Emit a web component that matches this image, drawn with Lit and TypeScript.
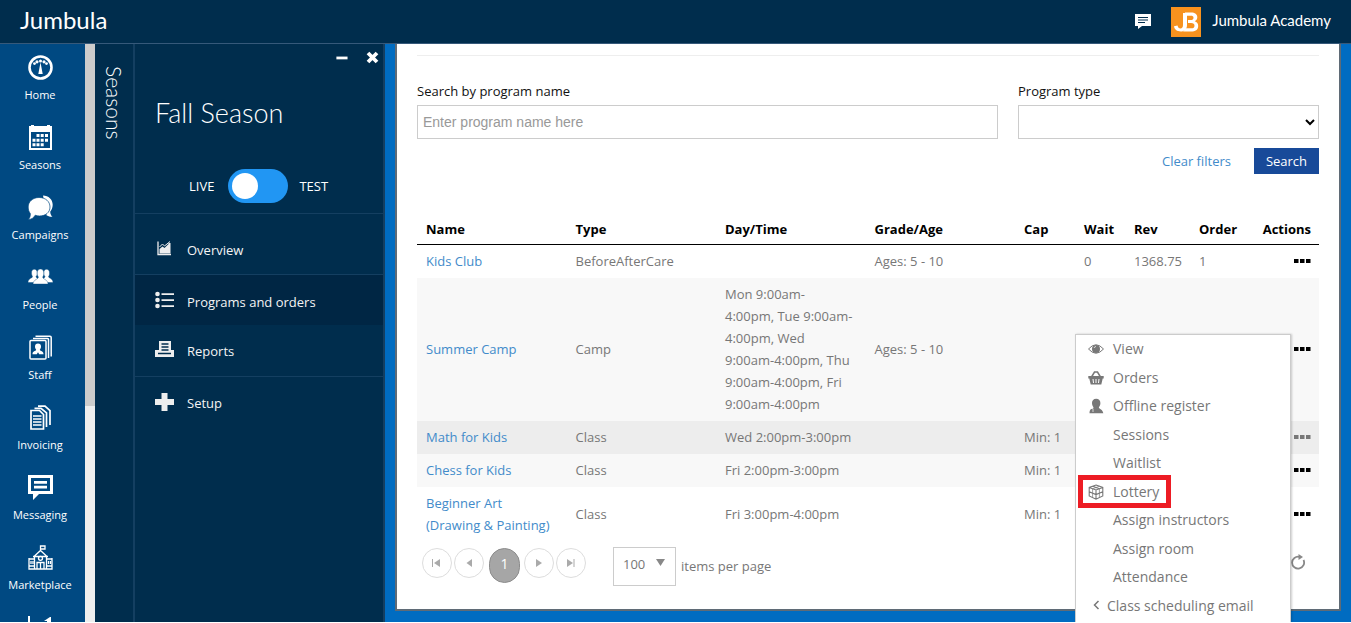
import { LitElement, html, css, svg, nothing, TemplateResult } from "lit";
import { customElement } from "lit/decorators.js";
import { classMap } from "lit/directives/class-map.js";

const icon = (size: number, box: string, body: TemplateResult) =>
  html`<svg width=${size} height=${size} viewBox=${box} aria-hidden="true">${body}</svg>`;

const navIcons: Record<string, TemplateResult> = {
  Home: svg`<circle cx="12.5" cy="12.5" r="11" fill="none" stroke="#fff" stroke-width="2.6"/>
    <path d="M12.500 7.500 L10.300 19 H14.700Z" fill="#fff"/>
    <g fill="#fff"><circle cx="12.500" cy="6" r="1.500"/><circle cx="9" cy="6.800" r="1.600"/><circle cx="16" cy="6.800" r="1.600"/><circle cx="6.500" cy="8.600" r="1.400"/><circle cx="18.500" cy="8.600" r="1.400"/></g>`,
  Seasons: svg`<path d="M1 1H3V0H6V1H19V0H22V1H24V25H1Z" fill="#fff"/>
    <path d="M3 7H22V23H3Z" fill="#004982"/>
    <g fill="#fff"><path d="M8.500 9h3v3h-3zM12.700 9h3v3h-3zM17 9h3v3h-3zM4.500 13.700h3v3h-3zM8.500 13.700h3v3h-3zM12.700 13.700h3v3h-3zM17 13.700h3v3h-3zM4.500 18.300h3v3h-3zM8.500 18.300h3v3h-3zM12.700 18.300h3v3h-3z"/></g>`,
  Campaigns: svg`<path d="M15 .5c5.500 0 9.700 4 9.700 9.300 0 3-1.100 5.300-2.500 7 .2 2.500 1 4 2.300 5-2.500.2-4.700-.6-6-1.500z" fill="#fff"/>
    <path d="M11 2.500c6.500 0 11 4 11 9.500S17.500 21 11.500 21c-1.500 0-3-.3-4.300-.8-1.500 2.800-4 4.200-6.900 4.300 1.500-1.500 2.200-3.500 2-6C1 17 .2 14.800.2 12 .2 6.500 5 2.500 11 2.500Z" fill="#fff" stroke="#004982" stroke-width=".7"/>`,
  People: svg`<g fill="#fff" stroke="#004982" stroke-width=".4"><path d="M3.500 8c0-2.500 1-3.700 2.800-3.700S9.200 5.500 9.200 8s-.7 2.800-1.200 3.500c0 1.500 3 2 3 6H0c0-4.500 4.500-4 4.500-6C4 10.500 3.500 9.500 3.500 8Z"/>
    <path d="M15.800 8c0-2.500 1-3.700 2.800-3.700s2.900 1.200 2.900 3.700-.5 2.500-1 3.500c0 2 4.500 1.500 4.500 6H14c0-4 3-4.500 3-6-.5-.7-1.200-1.500-1.200-3.500Z"/>
    <path d="M9.200 8c0-2.500 1.300-4 3.300-4s3.300 1.500 3.300 4-.5 3-1.100 4c0 2.500 4.900 2 5.400 7H5c.5-5 5.400-4.500 5.400-7-.6-1-1.200-1.700-1.200-4Z"/></g>`,
  Staff: svg`<g fill="none" stroke="#fff" stroke-width="1.500"><rect x="2" y="5.500" width="16" height="18.500" rx="1"/><path d="M5 3.500h14.500a1 1 0 0 1 1 1V23M7.500 1.200H22a1.200 1.200 0 0 1 1.200 1.200V21.500"/></g>
    <path d="M10 8.500c2 0 3 1.200 3 3 0 1.500-.5 2.300-1.200 3.200.5 1.600 3.700 1 3.700 4.500h-4.300l-1.200-2-1.200 2H4.500c0-3.500 3.200-2.900 3.700-4.500C7.500 13.800 7 13 7 11.500c0-1.800 1-3 3-3Z" fill="#fff"/>`,
  Invoicing: svg`<g fill="none" stroke="#fff" stroke-width="1.700"><path d="M7.500 5.500H3V24h12.500V9.500L11.500 5.500Z"/><path d="M6.500 3.300H13l5.500 4.500V22M10 1.200h7l5 4.500V20M5 11h8.500M5 14h8.500M5 17h8.500M5 20h8.500"/></g>`,
  Messaging: svg`<path d="M0 0H25V19H11L5 25V19H0ZM3 3V16H22V3Z" fill="#fff" fill-rule="evenodd"/><path d="M6 6h13v2.700H6zM6 10.700h13v2.700H6z" fill="#fff"/>`,
  Marketplace: svg`<g fill="none" stroke="#fff" stroke-width="1.300"><path d="M12.500 5.500V1h4.500v3h-4.500M6.500 24V11l6-5.500 6 5.500v13M5 11.500h15M.7 14h5.800M18.500 14h5.800M1 13v11h23V13M9 24v-6.500h7V24M12.500 17.500V24"/><circle cx="12.500" cy="13.300" r="2"/><path d="M3 16v3M5 16v3M20.500 16v3M22.500 16v3M1 21h5M19 21h5"/></g>`,
  "": svg`<path d="M0 1h2v24H0zM16 6l6-4h1v23h-4V6z" fill="#fff"/>`,
};

const menuIcons: Record<string, TemplateResult> = {
  eye: svg`<path d="M.5 8Q8-.5 15.500 8 8 16.500.5 8Z" fill="none" stroke="#777"/><circle cx="8" cy="8" r="4" fill="#777"/><path d="M6 7Q6.500 5.500 8 5.500" stroke="#fff" fill="none" stroke-width=".7"/>`,
  basket: svg`<path d="M3.500 7 6.500 2H9.500L12.500 7" fill="none" stroke="#777" stroke-width="1.500"/><path d="M.3 6h15.400v2.500h-1L13.300 14.500H2.700L1.300 8.500h-1Z" fill="#777"/><path d="M5 9l.5 4M8 9v4M11 9l-.5 4" stroke="#fff"/>`,
  person: svg`<path d="M4 5C4 2.500 5.500.8 8.200.8s4.200 1.700 4.200 4.200c0 2-.8 3.400-1.600 4.400.4 1.800 4 1.600 4.500 5.800H1.500c0-1.700.3-2.900 1-3.700l3.200-1.900C4.700 8.200 4 7 4 5Z" fill="#777"/><path d="M2 10.500h3v3.500" fill="none" stroke="#fff" stroke-width=".7"/>`,
  cube: svg`<path d="M8 1 14.800 3.500V12L8 15.200 1.200 12V3.500ZM1.200 3.500 8 6l6.800-2.500M8 6v9.200M4.600 2.300l6.800 2.500M1.200 7.700 8 10.600l6.800-2.900" fill="none" stroke="#777" stroke-width="1.100"/><path d="M4.600 5v8.500M11.400 5v8.500M11.400 2.300 4.600 4.800" fill="none" stroke="#777" stroke-width=".7"/>`,
};

const sideIcons: Record<string, TemplateResult> = {
  chart: svg`<path d="M3 2.500v13H16" fill="none" stroke="#eee" stroke-width="1.300"/><path d="M4.500 14.500V10l3-2.500 2 1.500 4-4v9.500ZM13.500 4h2v10.500h-2Z" fill="#eee"/><path d="M4.500 8 7.500 5l2 2 5.500-4.500" fill="none" stroke="#eee"/>`,
  list: svg`<g fill="#eee"><circle cx="2.500" cy="3" r="2.300"/><circle cx="2.500" cy="9" r="2.300"/><circle cx="2.500" cy="15" r="2.300"/><path d="M6.500 2.200H19v1.800H6.500zM6.500 8.200H19V10H6.500zM6.500 14.200H19V16H6.500z"/></g>`,
  print: svg`<path d="M4 0h12v9h3v7H0v-7h4Z" fill="#eee"/><path d="M6.500 3h7M6.500 6h7M6.500 9h7M3 12.500h13" stroke="#002d4d" stroke-width="1.300"/>`,
  plus: svg`<path d="M6.500 0h6v6h6.500v6h-6.500v6h-6v-6H0V6h6.500Z" fill="#eee"/>`,
};

interface Program {
  name: string[];
  type: string;
  time: string[];
  ages?: string;
  cap?: string;
  wait?: string;
  rev?: string;
  order?: string;
  shade?: string;
}

const programs: Program[] = [
  { name: ["Kids Club"], type: "BeforeAfterCare", time: [], ages: "Ages: 5 - 10", wait: "0", rev: "1368.75", order: "1" },
  {
    name: ["Summer Camp"],
    type: "Camp",
    time: ["Mon 9:00am-", "4:00pm, Tue 9:00am-", "4:00pm, Wed", "9:00am-4:00pm, Thu", "9:00am-4:00pm, Fri", "9:00am-4:00pm"],
    ages: "Ages: 5 - 10",
    shade: "alt",
  },
  { name: ["Math for Kids"], type: "Class", time: ["Wed 2:00pm-3:00pm"], cap: "Min: 1", shade: "open" },
  { name: ["Chess for Kids"], type: "Class", time: ["Fri 2:00pm-3:00pm"], cap: "Min: 1", shade: "alt" },
  { name: ["Beginner Art", "(Drawing & Painting)"], type: "Class", time: ["Fri 3:00pm-4:00pm"], cap: "Min: 1" },
];

const lines = (items: string[]) => items.map((t, i) => html`${i ? html`<br />` : nothing}${t}`);

@customElement("top-bar")
class TopBar extends LitElement {
  static styles = css`
    :host { display: block; background: #002d4d; border-bottom: 1px solid #36597a; color: #fff; }
    .bar { height: 43px; display: flex; align-items: center; padding: 0 20px; font-family: Lato, "Open Sans", sans-serif; }
    .brand { font-size: 24px; line-height: 40px; height: 43px; flex: 1; color: inherit; text-decoration: none; }
    .chat { background: none; border: 0; padding: 0; margin-right: 20px; display: flex; }
    .logo { width: 30px; height: 30px; margin-right: 11px; }
    .account { font-size: 15px; line-height: 20px; height: 23px; }
    svg { display: block; }
  `;
  render() {
    return html`<header class="bar">
      <a class="brand" href="#">Jumbula</a>
      <button class="chat" aria-label="Messages">
        ${icon(16, "0 0 16 16", svg`<path d="M0 0H16V12H7L3 15V12H0Z" fill="#fff"/><path d="M3 3.500h10M3 6h10M3 8.500h7" stroke="#002d4d"/>`)}
      </button>
      <svg class="logo" viewBox="0 0 30 30" aria-hidden="true">
        <rect width="30" height="30" fill="#f7921e" />
        <path d="M12 6h4v12c0 4-2.500 6.500-6.200 6.500-4 0-6.300-2-6.800-5.200l3.500-.8c.4 2 1.400 2.900 2.900 2.900 1.700 0 2.600-1.200 2.600-3.400Z" fill="#fff" />
        <path d="M14 5.500h6c4 0 6.300 1.800 6.300 4.800 0 2-1 3.200-2.600 4 2.300.7 3.500 2.300 3.500 4.600 0 3.700-2.800 5.600-7.200 5.600h-8l3-3.200h5.300c2.200 0 3.200-.9 3.200-2.600s-1.200-2.600-3.400-2.600H17V13h2.500c2 0 3-.8 3-2.300s-1-2-2.800-2H14Z" fill="#fff" />
      </svg>
      <span class="account">Jumbula Academy</span>
    </header>`;
  }
}

@customElement("main-nav")
class MainNav extends LitElement {
  static styles = css`
    :host { display: flex; overflow: hidden; }
    .list { width: 85px; box-sizing: border-box; padding: 0 5px 0 0; background: #004982; overflow: hidden; }
    .item { display: flex; flex-direction: column; align-items: center; gap: 5px; height: 70px; box-sizing: border-box; padding-top: 11px; color: #fff; text-decoration: none; font: 11px/20px "Open Sans", sans-serif; }
    .item svg { flex: none; display: block; }
    .track { width: 10px; background: #eee; }
    .thumb { height: 362px; background: #ccc; }
  `;
  render() {
    return html`<nav class="list">
        ${Object.entries(navIcons).map(
          ([name, shape]) => html`<a class="item" href="#" aria-label=${name || "Analytics"}>${icon(25, "0 0 25 25", shape)}<span>${name}</span></a>`
        )}
      </nav>
      <div class="track"><div class="thumb"></div></div>`;
  }
}

@customElement("season-panel")
class SeasonPanel extends LitElement {
  static styles = css`
    :host { display: flex; background: #002d4d; color: #fff; font: 13px/20px "Open Sans", sans-serif; }
    .tab { width: 38px; border-right: 2px solid #143f61; box-sizing: content-box; }
    .tab span { display: block; writing-mode: vertical-rl; margin: 22px 0 0 7px; font: 300 21px/24px Lato, sans-serif; }
    .panel { width: 248px; border-right: 2px solid #143f61; }
    .tools { display: flex; justify-content: flex-end; gap: 18px; padding: 6px 4px 0 0; }
    .tools button { background: none; border: 0; padding: 0; width: 13px; height: 14px; }
    svg { display: block; flex: none; }
    h1 { margin: 33px 20px 0; font: 300 27px/32px Lato, sans-serif; }
    .mode { display: flex; align-items: center; gap: 11px; margin: 40px 0 10px 54px; }
    .switch { appearance: none; margin: 0 0 0 3px; width: 60px; height: 34px; border-radius: 17px; background: #2196f3; padding: 4px; }
    .switch::before { content: ""; display: block; width: 26px; height: 26px; border-radius: 50%; background: #fff; }
    .link { display: flex; align-items: center; gap: 13px; height: 51px; padding-left: 20px; color: #f4f4f4; text-decoration: none; }
    .link.ruled { border-top: 1px solid #143f61; }
    .link.tall { height: 60px; }
    .link.tall span { padding-top: 12px; }
    .link.tall svg { padding-top: 8px; }
    .link.current { height: 50px; background: #002644; }
    .link.current span { padding-top: 4px; }
  `;
  render() {
    const links = [
      ["chart", "Overview", "ruled tall"],
      ["list", "Programs and orders", "ruled current"],
      ["print", "Reports", ""],
      ["plus", "Setup", "ruled"],
    ];
    return html`<div class="tab"><span>Seasons</span></div>
      <section class="panel">
        <div class="tools">
          <button aria-label="Minimize">${icon(13, "0 0 13 14", svg`<path d="M1 6h12v3H1Z" fill="#fff"/>`)}</button>
          <button aria-label="Close">${icon(13, "0 0 13 13", svg`<path d="M2 2l9 9m0-9l-9 9" stroke="#fff" stroke-width="3.800"/>`)}</button>
        </div>
        <h1>Fall Season</h1>
        <div class="mode"><span>LIVE</span><input class="switch" type="checkbox" role="switch" aria-label="Live or test" /><span>TEST</span></div>
        <nav>
          ${links.map(([glyph, text, kind]) => html`<a class="link ${kind}" href="#">${icon(19, "0 0 19 19", sideIcons[glyph])}<span>${text}</span></a>`)}
        </nav>
      </section>`;
  }
}

@customElement("program-list")
class ProgramList extends LitElement {
  static styles = css`
    :host { display: block; padding: 0 10px; font: 13px/22px "Open Sans", sans-serif; color: #777; }
    .card { background: #fff; border: 2px solid #5f6b76; border-top: 0; padding: 11px 20px 23px; }
    .rule { border: 0; border-top: 1px solid #eee; margin: 0 0 24px; }
    .filters { display: grid; grid-template-columns: 581fr 301fr; column-gap: 20px; }
    .field label { display: block; color: #111; margin-bottom: 3px; }
    .field input, .field select { display: block; box-sizing: border-box; width: 100%; height: 34px; border: 1px solid #ccc; border-radius: 0; background: #fff; color: #555; font: 14px/20px "Liberation Sans", sans-serif; padding: 0 5px; }
    .field select { padding: 0 1px; color: #000; }
    .field input::placeholder { color: #999; opacity: 1; }
    .buttons { display: flex; justify-content: flex-end; align-items: center; gap: 23px; margin: 9px 0 39px; }
    a { color: #428bca; text-decoration: none; }
    .search { width: 65px; height: 26px; border: 0; padding: 0; background: #184a99; color: #fff; font: inherit; }
    table { width: 100%; table-layout: fixed; border-collapse: separate; border-spacing: 0; }
    th, td { box-sizing: border-box; white-space: nowrap; }
    th { text-align: left; color: #000; font-weight: 700; padding: 5px 0 4px 9px; border-bottom: 1px solid #000; }
    td { padding: 5px 0 6px 9px; }
    .alt { background: #f8f8f8; }
    .open { background: #ededed; }
    .narrow { width: 60px; }
    .wait { width: 50px; }
    .money { width: 65px; }
    .order { width: 64px; }
    th.actions, td.actions { text-align: right; padding-right: 8px; padding-left: 0; }
    .more { background: none; border: 0; padding: 0 0 2px; color: #000; display: inline-flex; vertical-align: middle; }
    .open .more { color: #777; }
    .pager { display: flex; align-items: flex-start; gap: 2px; padding: 5px 5px 0; }
    .page { box-sizing: border-box; width: 30px; height: 30px; border-radius: 50%; border: 1px solid #ddd; background: #fff; padding: 0; display: grid; place-items: center; margin-top: 1px; }
    .page.on { width: 31px; height: 35px; border-radius: 16px; background: #a6a6a6; border-color: #8c8c8c; color: #fff; margin-left: 3px; margin-right: 2px; padding-bottom: 4px; font: 14px/22px "Open Sans", sans-serif; }
    .size { position: relative; margin-left: 25px; }
    .size select { appearance: none; width: 63px; height: 39px; border: 1px solid #ccc; border-radius: 0; background: #fff; color: #777; font: inherit; padding: 0 0 5px 9px; }
    .size svg { position: absolute; right: 11px; top: 11px; pointer-events: none; }
    .per { line-height: 38px; margin-left: 3px; flex: 1; }
    .refresh { background: none; border: 0; padding: 0; margin: 7px 8px 0 0; }
    svg { display: block; }
  `;
  private pageButton(label: string, shape: TemplateResult) {
    return html`<button class="page" aria-label=${label}>${icon(12, "0 0 12 12", shape)}</button>`;
  }
  render() {
    return html`<main class="card">
      <hr class="rule" />
      <div class="filters">
        <div class="field"><label for="name">Search by program name</label><input id="name" type="text" placeholder="Enter program name here" /></div>
        <div class="field"><label for="type">Program type</label><select id="type"><option></option></select></div>
      </div>
      <div class="buttons"><a href="#">Clear filters</a><button class="search">Search</button></div>
      <table>
        <thead>
          <tr>
            <th>Name</th><th>Type</th><th>Day/Time</th><th>Grade/Age</th><th class="narrow">Cap</th>
            <th class="wait">Wait</th><th class="money">Rev</th><th class="order">Order</th><th class="money actions">Actions</th>
          </tr>
        </thead>
        <tbody>
          ${programs.map(
            (p) => html`<tr class=${classMap({ [p.shade ?? "plain"]: true })}>
              <td><a href="#">${lines(p.name)}</a></td><td>${p.type}</td><td>${lines(p.time)}</td><td>${p.ages}</td>
              <td>${p.cap}</td><td>${p.wait}</td><td>${p.rev}</td><td>${p.order}</td>
              <td class="actions"><button class="more" aria-label="Actions for ${p.name.join(" ")}"><svg width="17" height="5" viewBox="0 0 17 5"><path d="M0 0h4.500v4H0zM6 0h4.500v4H6zM12 0h4.500v4H12z" fill="currentColor" /></svg></button></td>
            </tr>`
          )}
        </tbody>
      </table>
      <div class="pager">
        ${this.pageButton("First page", svg`<path d="M1 2h1v8H1zM9 2v8L3 6z" fill="#aaa"/>`)}
        ${this.pageButton("Previous page", svg`<path d="M9 2v8L3.500 6z" fill="#aaa"/>`)}
        <button class="page on">1</button>
        ${this.pageButton("Next page", svg`<path d="M3 2v8l6-4z" fill="#aaa"/>`)}
        ${this.pageButton("Last page", svg`<path d="M8.500 2h1v8H8.500zM2 2v8l6-4z" fill="#aaa"/>`)}
        <div class="size">
          <select id="size"><option>100</option></select>
          ${icon(9, "0 0 9 9", svg`<path d="M0 1h9L4.500 8z" fill="#888"/>`)}
        </div>
        <label class="per" for="size">items per page</label>
        <button class="refresh" aria-label="Refresh">
          ${icon(16, "0 0 16 16", svg`<path d="M9.500 2.800A6 6 0 1 0 13.500 6" fill="none" stroke="#888" stroke-width="1.800"/><path d="M8.500 0v6L13 3z" fill="#888"/>`)}
        </button>
      </div>
    </main>`;
  }
}

@customElement("action-menu")
class ActionMenu extends LitElement {
  static styles = css`
    :host { display: block; box-sizing: border-box; background: #fff; border: 1px solid #ccc; border-bottom: 0; padding-bottom: 2px; box-shadow: 1px 0 2px rgba(0, 0, 0, 0.2); }
    ul { list-style: none; margin: 0; padding: 0; height: 100%; display: grid; grid-auto-rows: 1fr; }
    li { position: relative; display: flex; }
    a { flex: 1; display: grid; grid-template-columns: 16px 1fr; column-gap: 9px; align-items: center; padding-left: 12px; color: #777; text-decoration: none; font: 14px/20px "Open Sans", sans-serif; }
    a.sub { grid-template-columns: 10px 1fr; }
    svg { display: block; }
    .mark { position: absolute; left: 2px; top: -3px; width: 83px; height: 23px; border: 5px solid #ed1c24; pointer-events: none; }
  `;
  render() {
    const items = [
      ["View", "eye"], ["Orders", "basket"], ["Offline register", "person"], ["Sessions", ""], ["Waitlist", ""],
      ["Lottery", "cube"], ["Assign instructors", ""], ["Assign room", ""], ["Attendance", ""],
    ];
    return html`<ul>
      ${items.map(
        ([text, glyph]) => html`<li>
          <a href="#">${glyph ? icon(16, "0 0 16 16", menuIcons[glyph]) : html`<span></span>`}<span>${text}</span></a>
          ${text === "Lottery" ? html`<div class="mark"></div>` : nothing}
        </li>`
      )}
      <li><a class="sub" href="#">${icon(12, "0 0 12 12", svg`<path d="M10.500 1 6.500 5l4 4" fill="none" stroke="#777" stroke-width="1.500"/>`)}<span>Class scheduling email</span></a></li>
    </ul>`;
  }
}

@customElement("app-root")
class AppRoot extends LitElement {
  static styles = css`
    :host { display: flex; flex-direction: column; height: calc(100vh - 1px); overflow: hidden; }
    .body { flex: 1; min-height: 0; display: flex; position: relative; background: #006cc1; overflow: hidden; }
    program-list { flex: 1; min-width: 0; }
    action-menu { position: absolute; top: 290px; bottom: 0; right: 60px; width: 216px; }
  `;
  render() {
    return html`<top-bar></top-bar>
      <div class="body">
        <main-nav></main-nav>
        <season-panel></season-panel>
        <program-list></program-list>
        <action-menu></action-menu>
      </div>`;
  }
}
